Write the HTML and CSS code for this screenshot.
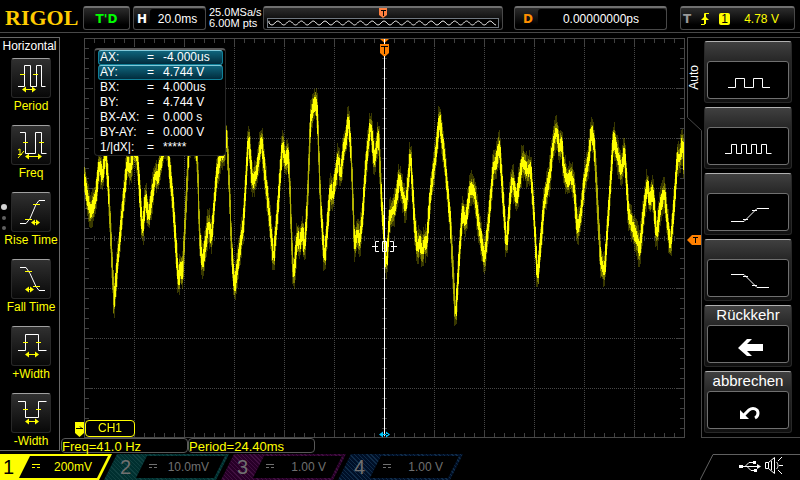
FILE: index.html
```html
<!DOCTYPE html>
<html lang="de">

<head>
   <meta charset="UTF-8">
   <meta name="viewport" content="width=device-width, initial-scale=1.0">
   <title>RIGOL</title>
   <link rel="stylesheet" href="styles.css">
</head>

<body>
   <header class="topbar">
      <h1 class="logo">RIGOL</h1>
      <button class="status panel">T'D</button>
      <button class="timebase panel"><b>H</b><span class="value">20.0ms</span></button>
      <p class="rate">25.0MSa/s<br>6.00M pts</p>
      <div class="memory panel">
         <svg class="memory-tag" viewBox="0 0 8 10" aria-hidden="true">
            <path fill="#ff8040" d="M0 0h8v7l-4 3-4-3z" />
            <path fill="none" stroke="#000" d="M2 2.500h5M4.500 2v6" />
         </svg>
         <svg class="memory-wave" viewBox="0 0 234 9" preserveAspectRatio="none" aria-hidden="true">
            <path id="memoryPath" fill="none" stroke="#fff" />
         </svg>
      </div>
      <button class="delay panel"><b>D</b><span class="value">0.00000000ps</span></button>
      <button class="trigger panel">
         <b>T</b>
         <svg width="8" height="12" viewBox="0 0 8 12" aria-hidden="true">
            <path fill="none" stroke="#ff0" d="M0 11.500h3.500v-11h4.500M4.500 11v-10" />
            <path fill="#ff0" d="M0 7l4-4 4 4z" />
         </svg>
         <span class="source">1</span>
         <span class="level">4.78 V</span>
      </button>
   </header>

   <main>
      <nav class="measure">
         <h2>Horizontal</h2>
         <button class="item">
            <svg class="icon" viewBox="1 1 38 38">
               <path class="w" d="M7 28.500h6.500v-21h6v21h6v-21h5v21h4" />
               <path class="y" d="M9 16.500h5M22 16.500h5M12 31.500h12" />
               <path class="f" d="M11 31.500l4-3v6zM25 31.500l-4-3v6z" />
            </svg>
            Period
         </button>
         <button class="item">
            <svg class="icon" viewBox="1 1 38 38">
               <path class="w" d="M9 7.500h5.500v21h10v-21h6v21h5" />
               <path class="y" d="M12 17.500h5M28 17.500h5M16 31.500h13M7 25l2-1v5M7 29.500h4M7 33l6-7" />
               <path class="f" d="M14 31.500l4-3v6zM31 31.500l-4-3v6z" />
            </svg>
            Freq
         </button>
         <button class="item">
            <svg class="icon" viewBox="1 1 38 38">
               <path class="w" d="M9 31.500h6l4-5 6-14 3-4h6" />
               <path class="y" d="M22 12.500h7M14 27.500h7M22 30.500h5" />
               <path class="f" d="M20 30.500l4-3v6zM29 30.500l-4-3v6z" />
            </svg>
            Rise Time
         </button>
         <button class="item">
            <svg class="icon" viewBox="1 1 38 38">
               <path class="w" d="M9 8.500h6l4 6 6 13 3 4h6" />
               <path class="y" d="M14 12.500h7M22 27.500h7M16 30.500h5" />
               <path class="f" d="M14 30.500l4-3v6zM23 30.500l-4-3v6z" />
            </svg>
            Fall Time
         </button>
         <button class="item">
            <svg class="icon" viewBox="1 1 38 38">
               <path class="w" d="M7 24.500h7.500v-16h13v16h8" />
               <path class="y" d="M12 16.500h5M25 16.500h5M16 28.500h10" />
               <path class="f" d="M14 28.500l4-3v6zM28 28.500l-4-3v6z" />
            </svg>
            +Width
         </button>
         <button class="item">
            <svg class="icon" viewBox="1 1 38 38">
               <path class="w" d="M7 8.500h7.500v16h13v-16h8" />
               <path class="y" d="M12 16.500h5M25 16.500h5M16 28.500h10" />
               <path class="f" d="M14 28.500l4-3v6zM28 28.500l-4-3v6z" />
            </svg>
            -Width
         </button>
         <div class="pages"><i class="on"></i><i></i><i></i></div>
      </nav>

      <section class="center">
         <div class="scope">
            <canvas class="screen" width="601" height="400"></canvas>
            <svg class="cursor" viewBox="0 0 27 400" aria-hidden="true">
               <path fill="#ff8000" d="M9 1h9l-4.500 4zM9 6h9v9l-4.500 4-4.500-4z" />
               <path fill="none" stroke="#000" d="M10 8.500h7M13.500 8v8" />
               <path fill="none" stroke="#fff" d="M13.500 1v5M13.500 18v380M1 208.500h6M8 203.500h-3.500v10h3.500M13 203.500h-1.500v10h1.500M14 203.500h1.500v10h-1.500M19 203.500h3.500v10h-3.500M20 208.500h6" />
               <path fill="#00c8ff" d="M8 396.500l4-3v6zM19 396.500l-4-3v6zM10 396h7v1h-7z" />
            </svg>
            <table class="cursors">
               <tr class="sel"><td>AX:</td><td>=</td><td>-4.000us</td></tr>
               <tr class="sel"><td>AY:</td><td>=</td><td>4.744 V</td></tr>
               <tr><td>BX:</td><td>=</td><td>4.000us</td></tr>
               <tr><td>BY:</td><td>=</td><td>4.744 V</td></tr>
               <tr><td>BX-AX:</td><td>=</td><td>0.000 s</td></tr>
               <tr><td>BY-AY:</td><td>=</td><td>0.000 V</td></tr>
               <tr><td>1/|dX|:</td><td>=</td><td>*****</td></tr>
            </table>
            <span class="ch-label">CH1</span>
            <svg class="ch-mark" viewBox="0 0 9 15" aria-hidden="true">
               <path fill="#ff0" d="M0 0h9v11l-4.500 4-4.500-4z" />
               <path fill="none" stroke="#000" d="M1 6.500h7M5 4.500l2 2" />
            </svg>
            <svg class="level-mark" viewBox="0 0 15 10" aria-hidden="true">
               <path fill="#ff8000" d="M0 5l5-5h10v10h-10z" />
               <path fill="none" stroke="#000" d="M6 2.500h5M8.500 2v6" />
            </svg>
         </div>
         <div class="readouts">
            <span>Freq=41.0 Hz</span>
            <span>Period=24.40ms</span>
         </div>
      </section>

      <aside class="menu">
         <div class="tab">
            <svg viewBox="0 0 15 401" aria-hidden="true">
               <path fill="none" stroke="#484848" d="M15 .500h-14.500v80l14 13v307.500" />
            </svg>
            <span>Auto</span>
         </div>
         <div class="keys">
            <button class="key" aria-label="Pulse">
               <svg viewBox="0 0 80 36"><path class="w" d="M20 25.500h7.500v-9h9v9h9v-9h9v9h7.500" /></svg>
            </button>
            <button class="key" aria-label="Pulse train">
               <svg viewBox="0 0 80 36"><path class="w" d="M17 25.500h6.500v-9h5v9h5v-9h5v9h5v-9h5v9h5v-9h5v9h5" /></svg>
            </button>
            <button class="key" aria-label="Rising edge">
               <svg viewBox="0 0 80 36"><path class="w" d="M23 27.500h13l13-13h12M35 25.500h5M44 16.500h5" /></svg>
            </button>
            <button class="key" aria-label="Falling edge">
               <svg viewBox="0 0 80 36"><path class="w" d="M23 14.500h13l13 13h12M35 16.500h5M44 25.500h5" /></svg>
            </button>
            <button class="key">
               Rückkehr
               <svg viewBox="0 0 80 36"><path fill="#fff" d="M30 22l9-9h5l-5 5h16v7h-16l5 5h-5z" /></svg>
            </button>
            <button class="key">
               abbrechen
               <svg viewBox="0 0 80 36">
                  <path fill="#fff" d="M32 18v9h9z" />
                  <path fill="none" stroke="#fff" stroke-width="3" d="M36 23l5-5c4-3 9-1 9 3 0 2-1 4-3 5" />
               </svg>
            </button>
         </div>
      </aside>
   </main>

   <footer>
      <button class="channel ch1"><b>1</b><span><i class="dc"></i>200mV</span></button>
      <button class="channel ch2"><b>2</b><span><i class="dc"></i>10.0mV</span></button>
      <button class="channel ch3"><b>3</b><span><i class="dc"></i>1.00 V</span></button>
      <button class="channel ch4"><b>4</b><span><i class="dc"></i>1.00 V</span></button>
      <svg class="tray" viewBox="0 0 100 26" aria-hidden="true">
         <path fill="none" stroke="#606060" d="M0 26l13-25.500h87" />
         <path fill="none" stroke="#fff" d="M41 12.500h17M45 12.500l4-4h5M47 12.500l4 4h4" />
         <path fill="#fff" d="M39 11h4v3h-4zM57 10l4 2.500-4 2.500zM53 7h3v3h-3zM54 15h3v3h-3z" />
         <path fill="none" stroke="#fff" d="M65.500 8.500h3l6-5v16l-6-5h-3zM68.500 8.500v6M71.500 7v9M76.500 8c2 2 2 5 0 7M78 7l4-4M79 11.500h4M78 16l4 4" />
      </svg>
   </footer>

   <script>
      const canvas = document.querySelector('.screen');
      const ctx = canvas.getContext('2d');

      // captured trace, x/y in screen pixels
      const trace = [[0, 140], [2, 155], [6, 175], [11, 161], [15, 125], [18, 140], [21, 112], [24, 150], [29.5, 264],
      [38, 171], [43, 123], [46, 133], [49, 108], [53, 120], [58, 195], [61, 158], [64, 180], [71, 136], [73, 141], [78, 115],
      [82, 100], [84, 120], [88, 158], [94, 245], [96, 228], [98, 238], [100, 198], [104, 115], [108, 90], [113, 120],
      [115, 198], [118, 227], [124, 185], [127, 201], [132, 138], [137, 112], [139, 118], [142, 94], [145, 150], [147, 210],
      [150, 250], [159, 185], [164, 98], [168, 145], [172, 135], [177, 101], [181, 141], [185, 178], [189, 222], [193, 175],
      [198, 105], [201, 125], [203, 114], [205, 135], [207, 199], [209, 241], [213, 197], [215, 207], [218, 192], [220, 212],
      [223, 165], [226, 82], [229, 68], [231, 64], [233, 75], [236, 165], [240, 223], [246, 150], [248, 159], [254, 119],
      [256, 139], [259, 112], [262, 98], [264, 79], [267, 122], [270, 209], [273, 193], [275, 205], [278, 179], [281, 132],
      [286, 85], [290, 124], [294, 95], [297, 162], [302, 230], [305, 179], [310, 170], [315, 140], [321, 170], [323, 152],
      [326, 115], [330, 185], [333, 212], [335, 202], [338, 215], [340, 202], [342, 208], [346, 155], [351, 119], [355, 80],
      [360, 119], [366, 185], [371, 281], [375, 215], [378, 172], [381, 185], [386, 149], [390, 154], [394, 185], [400, 222],
      [404, 185], [409, 127], [411, 127], [415, 107], [418, 152], [422, 209], [426, 155], [428, 140], [432, 162], [438, 122],
      [443, 134], [446, 129], [449, 169], [453, 240], [460, 162], [465, 139], [469, 104], [472, 92], [475, 112], [477, 102],
      [479, 129], [483, 144], [486, 137], [489, 145], [493, 192], [496, 179], [500, 142], [504, 122], [507, 92], [510, 109],
      [514, 185], [516, 222], [520, 235], [524, 175], [529, 99], [533, 117], [537, 134], [540, 112], [544, 175], [549, 192],
      [553, 202], [555, 215], [559, 175], [563, 145], [565, 164], [568, 152], [570, 172], [572, 199], [576, 167], [580, 154],
      [583, 185], [586, 209], [590, 162], [593, 119], [595, 122], [598, 104], [600, 132]];

      const dotted = (x1, y1, x2, y2) => {
         ctx.setLineDash([1, 1]);
         ctx.beginPath();
         ctx.moveTo(x1, y1);
         ctx.lineTo(x2, y2);
         ctx.stroke();
         ctx.setLineDash([]);
      }

      const drawGrid = () => {
         ctx.strokeStyle = '#484848';
         for (let x = 50; x < 600; x += 50) dotted(x + 0.5, 0, x + 0.5, 400);
         for (let y = 50; y < 400; y += 50) dotted(0, y + 0.5, 600, y + 0.5);
         ctx.fillStyle = '#404040';
         for (let x = 10; x < 600; x += 10) {
            const h = x % 50 == 0 ? 7 : 4;
            ctx.fillRect(x, 1, 1, h);
            ctx.fillRect(x, 399 - h, 1, h);
            ctx.fillRect(x, 198, 1, 5);
         }
         for (let y = 10; y < 400; y += 10) {
            const w = y % 50 == 0 ? 7 : 4;
            ctx.fillRect(1, y, w, 1);
            ctx.fillRect(600 - w, y, w, 1);
            ctx.fillRect(298, y, 5, 1);
         }
         ctx.strokeRect(0.5, 0.5, 600, 399);
      }

      let seed = 7;
      const rand = () => {
         seed = (seed * 16807) % 2147483647;
         return seed / 2147483647;
      }

      const heightAt = (x) => {
         let i = 0;
         while (i < trace.length - 2 && trace[i + 1][0] < x) i++;
         const [x0, y0] = trace[i];
         const [x1, y1] = trace[i + 1];
         return y0 + (y1 - y0) * (x - x0) / (x1 - x0);
      }

      // each column is a faint noise band with a bright core
      const drawTrace = () => {
         for (let x = 0; x < 600; x++) {
            const a = heightAt(Math.max(x - 0.5, 0));
            const b = heightAt(Math.min(x + 0.5, 600));
            const top = Math.min(a, b);
            const bottom = Math.max(a, b);
            const band = (n, color) => {
               ctx.fillStyle = color;
               ctx.fillRect(x, Math.round(top - n), 1, Math.round(bottom - top + 2 * n));
            }
            band(11 + rand() * 7, 'rgba(255, 255, 0, 0.22)');
            band(7 + rand() * 4, 'rgba(255, 255, 0, 0.35)');
            band(3 + rand() * 4, bottom - top > 18 ? 'rgba(255, 255, 0, 0.4)' : '#ff0');
         }
      }

      let d = 'M1 2';
      for (let x = 1; x < 233; x++) d += `L${x} ${(4.5 + 2.2 * Math.cos((x - 118) * Math.PI / 6) * -1).toFixed(1)}`;
      document.querySelector('#memoryPath').setAttribute('d', d);

      drawGrid();
      drawTrace();
   </script>
</body>

</html>
```
FILE: styles.css
```css
* {
   padding: 0;
   margin: 0;
   box-sizing: border-box;
}

body {
   background-color: #000;
   color: #fff;
   font-family: "Liberation Sans", Arial, sans-serif;
   font-size: 12px;
   min-height: 100vh;
   display: flex;
   flex-direction: column;
}

button {
   font: inherit;
   color: inherit;
   background: none;
   border: none;
   cursor: pointer;
}

svg {
   display: block;
}

.w {
   fill: none;
   stroke: #fff;
}

.y {
   fill: none;
   stroke: #ff0;
}

.f {
   fill: #ff0;
}

/* top bar */
.topbar {
   height: 33px;
   padding: 4px 5px 0 5px;
   display: flex;
   align-items: center;
   gap: 3px;
   border-bottom: 1px solid #484848;
}

.logo {
   width: 75px;
   font-family: "Liberation Serif", serif;
   font-size: 22px;
   line-height: 24px;
   color: #fc0;
}

.panel {
   height: 24px;
   border: 1px solid #484848;
   border-top: 2px solid #707070;
   border-radius: 3px;
   background: linear-gradient(#2c2c2c, #000 80%);
   display: flex;
   align-items: center;
}

.status {
   width: 47px;
   justify-content: center;
   font-family: "DejaVu Sans", sans-serif;
   font-size: 12px;
   font-weight: bold;
   color: #0f0;
}

.timebase {
   width: 73px;
   padding-left: 3px;
   gap: 3px;
}

.panel b {
   font-family: "DejaVu Sans", sans-serif;
}

.value {
   flex: 1;
   height: 19px;
   line-height: 20px;
   border-radius: 3px;
   background-color: #000;
   text-align: center;
}

.rate {
   width: 51px;
   font-size: 11px;
   line-height: 11px;
   white-space: nowrap;
}

.memory {
   flex: 1;
   flex-direction: column;
   align-items: center;
   padding: 0 3px;
   margin-right: 8px;
}

.memory-tag {
   width: 8px;
   height: 10px;
}

.memory-wave {
   width: 100%;
   height: 10px;
   border: 1px solid #707880;
   background-color: #000;
}

.delay {
   width: 153px;
   padding-left: 8px;
   gap: 5px;
   margin-right: 10px;
}

.delay b {
   color: #ff9000;
}

.delay .value {
   padding-right: 2px;
}

.trigger {
   width: 115px;
   padding-left: 2px;
   gap: 10px;
   color: #ff0;
}

.trigger b {
   color: #999;
}

.source {
   width: 11px;
   height: 12px;
   line-height: 12px;
   border-radius: 2px;
   background-color: #ff0;
   color: #000;
   text-align: center;
}

.level {
   margin-left: 4px;
}

/* middle */
main {
   flex: 1;
   display: flex;
   align-items: flex-start;
   padding-top: 4px;
}

.measure {
   width: 60px;
   padding-bottom: 2px;
   border: 1px solid #686868;
   border-left: none;
   color: #ff0;
   position: relative;
}

.measure h2 {
   height: 20px;
   line-height: 17px;
   font-size: 12px;
   font-weight: normal;
   color: #fff;
   text-align: center;
}

.item {
   width: 100%;
   height: 67px;
   display: flex;
   flex-direction: column;
   align-items: center;
   gap: 1px;
   line-height: 14px;
   padding-left: 3px;
   white-space: nowrap;
}

.item:nth-of-type(6) {
   height: auto;
}

.icon {
   width: 40px;
   height: 40px;
   border: 1px solid #282828;
   border-top: 1px solid #a0a0a0;
   border-radius: 3px;
   background: linear-gradient(#303030, #080808);
}

.pages {
   position: absolute;
   left: 1px;
   top: 166px;
   width: 6px;
   display: flex;
   flex-direction: column;
   align-items: center;
   gap: 6px;
}

.pages i {
   width: 4px;
   height: 4px;
   border-radius: 50%;
   background-color: #606060;
}

.pages .on {
   width: 6px;
   height: 6px;
   background-color: #d0d0d0;
}

.center {
   flex: 1;
   min-width: 0;
   padding-top: 1px;
}

.scope {
   position: relative;
   margin: 0 2px 0 24px;
}

.screen {
   display: block;
   width: 100%;
   height: 400px;
}

.cursor {
   position: absolute;
   left: 0;
   right: 0;
   top: 0;
   width: 27px;
   height: 400px;
   margin: 0 auto;
}

.cursors {
   position: absolute;
   left: 10px;
   top: 10px;
   width: 132px;
   padding: 0 2px 0 3px;
   border: 1px solid #282828;
   border-top: 2px solid #585858;
   border-radius: 4px;
   background-color: #000;
   border-spacing: 0;
}

.cursors td {
   height: 15px;
   line-height: 13px;
   border: solid transparent;
   border-width: 1px 0;
   white-space: nowrap;
}

.cursors td:first-child {
   width: 49px;
   padding-left: 2px;
}

.cursors td:nth-child(2) {
   width: 16px;
}

.cursors .sel td {
   background: linear-gradient(#106880, #002838) border-box;
   border-top-color: #80c8d8;
   border-bottom-color: #108098;
}

.cursors .sel td:first-child {
   border-left: 1px solid #108098;
   border-radius: 3px 0 0 3px;
   padding-left: 1px;
}

.cursors .sel td:last-child {
   border-right: 1px solid #108098;
   border-radius: 0 3px 3px 0;
}

.ch-label {
   position: absolute;
   left: 1px;
   bottom: 1px;
   width: 50px;
   height: 17px;
   line-height: 15px;
   border: 1px solid #ff0;
   border-radius: 4px;
   background-color: #000;
   color: #ff0;
   text-align: center;
}

.ch-mark {
   position: absolute;
   left: -9px;
   bottom: 1px;
   width: 9px;
   height: 15px;
}

.level-mark {
   position: absolute;
   right: -17px;
   top: 197px;
   width: 15px;
   height: 10px;
}

.readouts {
   display: flex;
   padding-left: 1px;
   color: #ff0;
   font-size: 13px;
}

.readouts span {
   width: 127px;
   height: 15px;
   line-height: 15px;
   border: 1px solid #585858;
   border-radius: 4px;
}

/* right menu */
.menu {
   width: 113px;
   display: flex;
}

.tab {
   width: 15px;
   position: relative;
}

.tab svg {
   width: 15px;
   height: 401px;
}

.tab span {
   position: absolute;
   left: 0;
   top: 28px;
   width: 15px;
   line-height: 15px;
   writing-mode: vertical-rl;
   transform: rotate(180deg);
}

.keys {
   flex: 1;
   height: 401px;
   padding: 3px 8px 0 2px;
   border-top: 1px solid #484848;
   border-bottom: 1px solid #484848;
   display: flex;
   flex-direction: column;
   gap: 4px;
}

.key {
   height: 62px;
   padding: 0 2px 3px;
   border: 1px solid #282828;
   border-top: 1px solid #b0b0b0;
   border-radius: 3px;
   background: linear-gradient(#404040, #282828 30%, #101010);
   display: flex;
   flex-direction: column;
   justify-content: flex-end;
   align-items: center;
   gap: 1px;
   font-size: 15px;
   line-height: 18px;
}

.key svg {
   width: 100%;
   height: 38px;
   border: 1px solid #707070;
   border-radius: 3px;
   background-color: #000;
}

/* channels */
footer {
   height: 26px;
   display: flex;
   overflow: hidden;
}

.channel {
   width: 125px;
   height: 26px;
   margin-right: -8px;
   padding: 2px 4px 2px 15px;
   display: flex;
   align-items: center;
   gap: 4px;
   color: #707070;
   clip-path: polygon(13px 0, 100% 0, calc(100% - 13px) 100%, 0 100%);
}

.channel b {
   width: 13px;
   font-size: 20px;
   font-weight: normal;
   text-align: center;
}

.channel span {
   flex: 1;
   height: 22px;
   line-height: 23px;
   padding: 0 16px 0 13px;
   display: flex;
   justify-content: space-between;
   background-color: #000;
   clip-path: polygon(11px 0, 100% 0, calc(100% - 11px) 100%, 0 100%);
}

.dc {
   width: 8px;
   height: 4px;
   margin-top: 8px;
   border-top: 1px solid;
   border-bottom: 1px dashed;
}

.ch1 {
   margin-left: -13px;
   background-color: #ff0;
   color: #ff0;
}

.ch1 b {
   color: #000;
}

.ch2 {
   background: repeating-linear-gradient(45deg, #003030 0 2px, #104040 2px 3px);
}

.ch3 {
   background: repeating-linear-gradient(45deg, #280028 0 2px, #401040 2px 3px);
}

.ch4 {
   background: repeating-linear-gradient(45deg, #001028 0 2px, #102c48 2px 3px);
}

.tray {
   width: 100px;
   height: 26px;
   margin-left: auto;
}
```
